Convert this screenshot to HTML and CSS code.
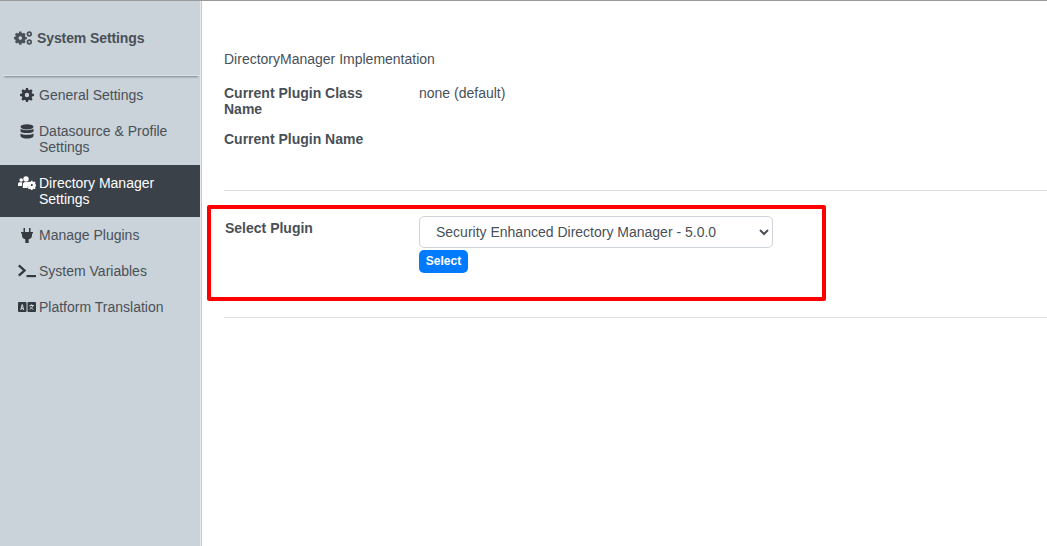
FILE: index.html
```html
<!DOCTYPE html>
<html lang="en">
<head>
<meta charset="utf-8">
<title>System Settings</title>
<link rel="stylesheet" href="styles.css">
</head>
<body>
<div class="app">
  <aside class="sidebar">
    <h2 class="side-title">
      <svg class="title-icon" viewBox="0 0 18 14"><g fill="#495057"><path fill-rule="evenodd" d="M5.200.5h2.200l.3 1.500 1 .5L10 1.700l1.600 1.600-.8 1.400.5 1 1.500.3v2.200l-1.500.3-.5 1 .8 1.400L10 12.500l-1.300-.8-1 .5-.3 1.500H5.200l-.3-1.500-1-.5-1.300.8L1 10.900l.8-1.400-.5-1L0 8.200V6l1.300-.3.5-1L1 3.300 2.600 1.700l1.300.8 1-.5zM6.300 5.300a1.800 1.800 0 100 3.600 1.800 1.800 0 000-3.600z"/><path fill-rule="evenodd" d="M15.300 .3a2.700 2.700 0 110 5.400 2.700 2.700 0 010-5.400zm0 1.700a1 1 0 100 2 1 1 0 000-2zM15.300 8.300a2.700 2.700 0 110 5.400 2.700 2.700 0 010-5.400zm0 1.700a1 1 0 100 2 1 1 0 000-2z"/></g></svg>
      <span>System Settings</span>
    </h2>
    <nav class="menu">
      <a class="item">
        <span class="ico"><svg width="14" height="14" viewBox="0 0 14 14"><path fill="#343a40" fill-rule="evenodd" d="M6 0h2l.4 1.800 1.100.5L11.100 1.300l1.500 1.500-1 1.600.5 1.100 1.900.5v2l-1.900.5-.5 1.100 1 1.600-1.500 1.500-1.600-1-1.100.5L8 14H6l-.4-1.800-1.100-.5-1.600 1-1.500-1.500 1-1.600-.5-1.100L0 8V6l1.900-.5.500-1.100-1-1.600 1.500-1.500 1.600 1 1.100-.5zM7 4.800a2.200 2.200 0 100 4.400 2.200 2.200 0 000-4.400z"/></svg></span>
        <span class="label">General Settings</span>
      </a>
      <a class="item">
        <span class="ico"><svg width="14" height="15" viewBox="0 0 14 15"><g fill="#343a40"><ellipse cx="7" cy="2.800" rx="6.500" ry="2.600"/><path d="M.5 4.800C2 6.600 12 6.600 13.500 4.800V7.400C12 9.400 2 9.400 .5 7.400zM.5 9.400C2 11.200 12 11.200 13.500 9.400V12.200C12 15.400 2 15.400 .5 12.200z"/></g></svg></span>
        <span class="label">Datasource &amp; Profile Settings</span>
      </a>
      <a class="item active">
        <span class="ico"><svg width="18" height="14" viewBox="0 0 18 14"><g fill="#fff"><circle cx="3.200" cy="4" r="1.800"/><circle cx="8" cy="3" r="2.700"/><path d="M0 10V8.200C0 6.800 1 6.300 2 6.300h2.200L3.800 10zM4.800 12V8.800C4.800 7 6 6 7.300 6h2.200c1 0 1.700.4 2 1l-2 2.500.4 2.500z"/><path fill-rule="evenodd" d="M13 6.300h1.500l.3 1 .8.300 1-.5 1 1-.5 1 .3.800 1 .3v1.400l-1 .3-.3.800.5 1-1 1-1-.5-.8.300-.3 1H13l-.3-1-.8-.3-1 .5-1-1 .5-1-.3-.8-1-.3v-1.400l1-.3.3-.8-.5-1 1-1 1 .5.800-.3zM13.800 9.500a1.100 1.100 0 100 2.200 1.100 1.100 0 000-2.200z" transform="translate(0 -1.500)"/></g></svg></span>
        <span class="label">Directory Manager Settings</span>
      </a>
      <a class="item">
        <span class="ico"><svg width="12" height="15" viewBox="0 0 12 15"><path fill="#343a40" d="M2.500 0h1.500v4H8V0h1.500v4H12v1.500h-1V7.500c0 2-1.300 3.400-3.300 3.800V15H4.300v-3.700C2.300 10.900 1 9.500 1 7.500V5.500H0V4h2.500z"/></svg></span>
        <span class="label">Manage Plugins</span>
      </a>
      <a class="item">
        <span class="ico"><svg width="18" height="14" viewBox="0 0 18 14"><g fill="#343a40"><path d="M1.600 .5 8.300 6.500 1.600 12.500 0 10.800 4.800 6.500 0 2.200z"/><rect x="8.500" y="11" width="9.500" height="2.200"/></g></svg></span>
        <span class="label">System Variables</span>
      </a>
      <a class="item">
        <span class="ico"><svg width="18" height="10" viewBox="0 0 18 10"><rect width="8.500" height="10" rx="1" fill="#343a40"/><rect x="9.500" width="8.500" height="10" rx="1" fill="#343a40"/><path d="M2.300 8 3.700 2.200h1.100L6.200 8H5l-.2-1H3.600l-.2 1zM3.900 6h.7L4.250 4.100z" fill="#cbd3da"/><path d="M11.500 3.500h4.500M13.700 2.200v1.300M15 3.500c-.5 2-2 3.200-3.500 3.800M12 4.500c.7 1.300 2 2.400 3.500 2.800" fill="none" stroke="#cbd3da" stroke-width="1"/></svg></span>
        <span class="label">Platform Translation</span>
      </a>
    </nav>
  </aside>
  <main class="content">
    <h3 class="heading">DirectoryManager Implementation</h3>
    <dl class="info">
      <dt>Current Plugin Class Name</dt>
      <dd>none (default)</dd>
      <dt>Current Plugin Name</dt>
      <dd></dd>
    </dl>
    <hr class="rule rule-first">
    <form class="select-form">
      <label class="form-label" for="plugin">Select Plugin</label>
      <div class="form-field">
        <select id="plugin" class="plugin-select">
          <option>Security Enhanced Directory Manager - 5.0.0</option>
        </select>
        <button type="button" class="btn">Select</button>
      </div>
      <div class="highlight"></div>
    </form>
    <hr class="rule">
  </main>
</div>
</body>
</html>
```

FILE: styles.css
```css
* { box-sizing: border-box; }
html, body { margin: 0; height: 100%; }
body {
  font-family: "Liberation Sans", Arial, sans-serif;
  font-size: 14px;
  line-height: 16px;
  color: #495057;
  background: #fff;
  overflow: hidden;
}
.app {
  display: flex;
  height: 546px;
  border-top: 1px solid #999;
}
.sidebar {
  width: 201px;
  flex: none;
  background: #cbd3da;
  border-right: 1px solid #e9ecef;
  box-shadow: 1px 0 0 #c6c8ca;
}
.side-title {
  display: flex;
  align-items: center;
  gap: 5px;
  height: 75px;
  margin: 0 0 0 2px;
  padding: 0 0 0 12px;
  font-size: 14px;
  font-weight: 700;
  letter-spacing: -.1px;
  color: #495057;
  border-bottom: 1px solid #dde2e6;
  box-shadow: 0 3px 2px -2px #7d858c;
}
.title-icon { width: 18px; height: 14px; flex: none; }
.menu { display: flex; flex-direction: column; padding-top: 1px; }
.item {
  display: flex;
  gap: 3px;
  padding: 10px 20px 10px 18px;
  color: #495057;
}
.item.active { background: #3a4149; color: #fff; }
.ico {
  width: 18px;
  height: 16px;
  flex: none;
  display: flex;
  align-items: center;
  justify-content: center;
}
.label { flex: 1; }
.content { flex: 1; padding: 0 0 0 23px; min-width: 0; }
.heading {
  margin: 50px 0 0;
  font-size: 14px;
  font-weight: 400;
  line-height: 16px;
}
.info {
  display: grid;
  grid-template-columns: 195px 1fr;
  row-gap: 14px;
  margin: 18px 0 0;
}
.info dt { font-weight: 700; width: 160px; }
.info dd { margin: 0; }
.rule { height: 1px; margin: 0; border: 0; background: #dee2e6; }
.rule-first { margin-top: 43px; }
.select-form {
  position: relative;
  display: grid;
  grid-template-columns: 195px 1fr;
  height: 126px;
  padding: 25px 0 0 1px;
}
.form-label { font-weight: 700; padding-top: 4px; }
.form-field { display: flex; flex-direction: column; align-items: flex-start; gap: 2px; margin-left: -1px; }
.plugin-select {
  width: 354px;
  height: 32px;
  padding: 0 12px;
  font: 14px/16px "Liberation Sans", Arial, sans-serif;
  color: #495057;
  background: #fff;
  border: 1px solid #ced4da;
  border-radius: 5px;
}
.btn {
  width: 49px;
  height: 23px;
  padding: 0 0 2px;
  font: 700 12px/16px "Liberation Sans", Arial, sans-serif;
  color: #fff;
  background: #007bff;
  border: 0;
  border-radius: 5px;
}
.highlight {
  position: absolute;
  left: -17px;
  top: 14px;
  width: 619px;
  height: 96px;
  border: 4px solid #f00;
  border-radius: 2px;
  pointer-events: none;
}
```
